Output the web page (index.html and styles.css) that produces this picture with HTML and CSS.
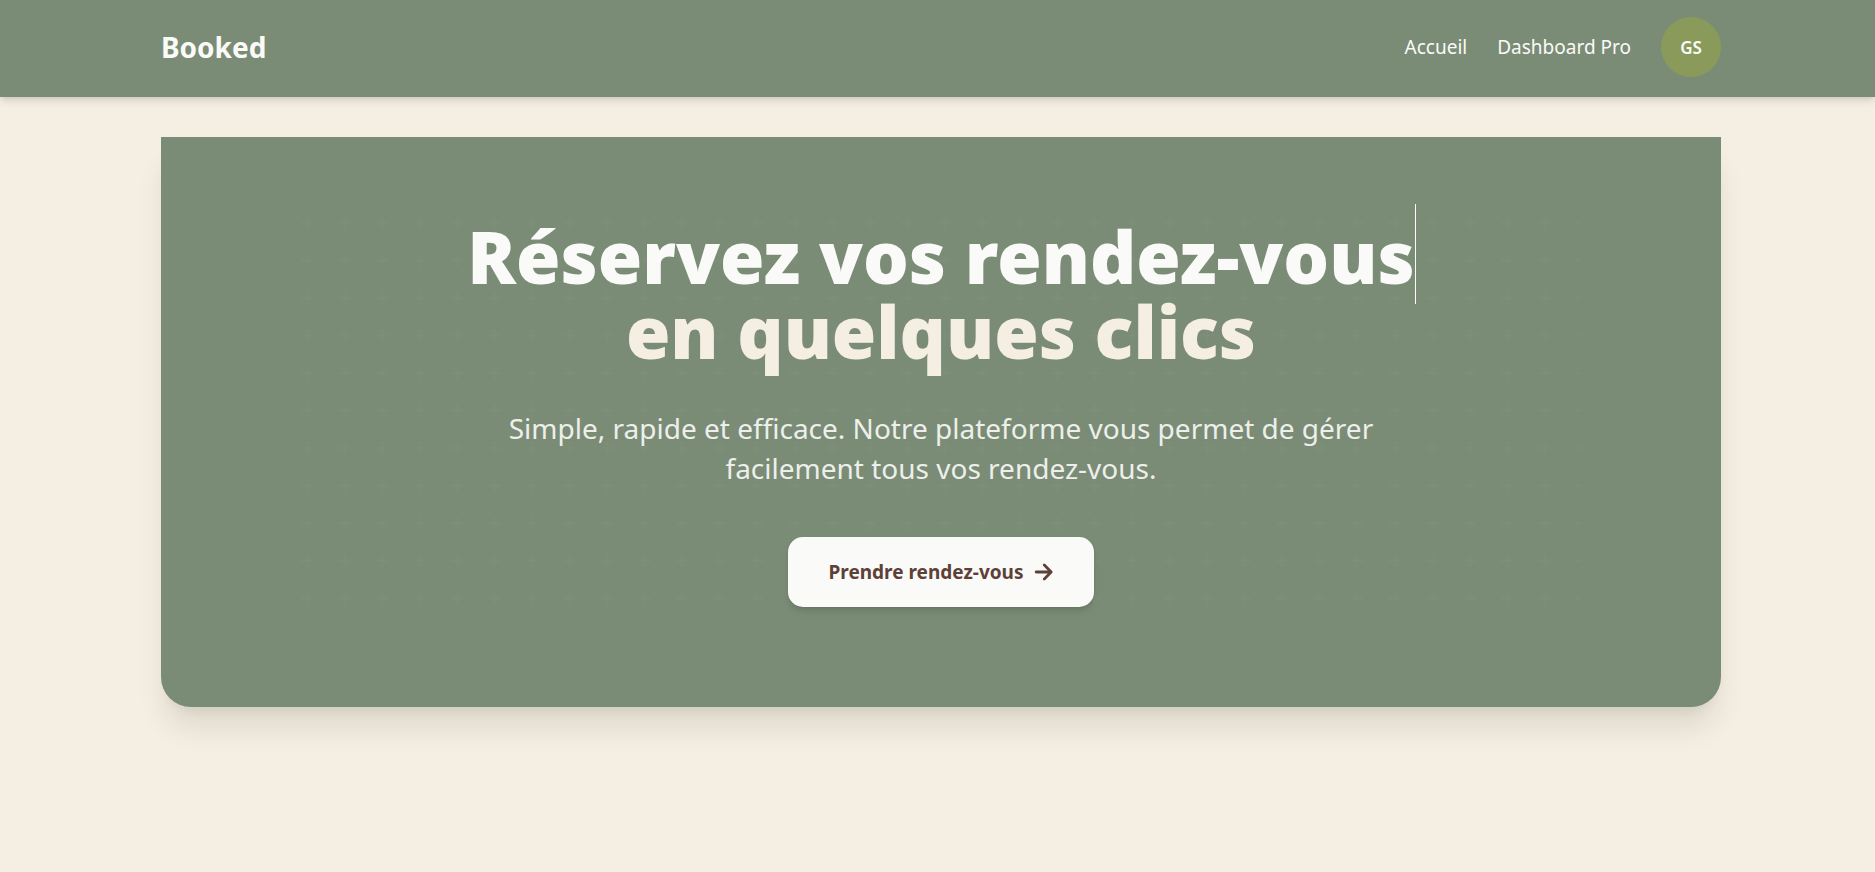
FILE: index.html
```
<!DOCTYPE html>
<html lang="fr">
<head>
<meta charset="utf-8">
<meta name="viewport" content="width=device-width, initial-scale=1">
<title>Booked</title>
<link rel="stylesheet" href="styles.css">
</head>
<body>
<header class="site-header">
  <div class="container header-row">
    <a class="brand" href="#">Booked</a>
    <nav class="nav">
      <a class="nav-link" href="#">Accueil</a>
      <a class="nav-link" href="#">Dashboard Pro</a>
      <button class="avatar" type="button">GS</button>
    </nav>
  </div>
</header>
<main class="main">
  <section class="container hero">
    <div class="hero-content">
      <svg class="hero-pattern" aria-hidden="true">
        <defs>
          <pattern id="plus" width="37.5" height="37.5" patternUnits="userSpaceOnUse">
            <path transform="scale(1.25)" d="M6 4V0H4v4H0v2h4v4h2V6h4V4H6z" fill="#fafaf8"/>
          </pattern>
        </defs>
        <rect width="100%" height="100%" fill="url(#plus)"/>
      </svg>
      <h1 class="hero-title">
        <span class="typed">Réservez vos rendez-vous</span>
        <span class="hero-accent">en quelques clics</span>
      </h1>
      <p class="hero-text">Simple, rapide et efficace. Notre plateforme vous permet de gérer facilement tous vos rendez-vous.</p>
      <a class="cta" href="#">Prendre rendez-vous
        <svg class="cta-icon" viewBox="0 0 20 20" aria-hidden="true"><path d="M2.200 10H16.500M10.300 3.100L17.200 10l-6.900 6.900" fill="none" stroke="currentColor" stroke-width="2.800" stroke-linecap="round" stroke-linejoin="round"/></svg>
      </a>
    </div>
  </section>
</main>
</body>
</html>
```
FILE: styles.css
```
* {
  box-sizing: border-box;
}

body {
  margin: 0;
  min-height: 100vh;
  background: #f5eee3;
  color: #fafaf8;
  font-family: "Segoe UI", "Noto Sans", "Open Sans", sans-serif;
  font-size: 20px;
}

.container {
  width: calc(100% - 80px);
  max-width: 1560px;
  margin: 0 auto;
}

.site-header {
  position: relative;
  padding-left: 7px;
  background: #7a8c76;
  box-shadow: 0 5px 8px -1px rgb(30 50 10 / 11%), 0 3px 5px -2px rgb(0 0 0 / 10%);
}

.header-row {
  display: flex;
  align-items: center;
  justify-content: space-between;
  padding: 17px 0 20px;
}

.brand {
  color: inherit;
  font-size: 28px;
  font-weight: 700;
  line-height: 42px;
  text-decoration: none;
}

.nav {
  display: flex;
  align-items: center;
  gap: 30px;
}

.nav-link {
  color: inherit;
  font-size: 19px;
  line-height: 30px;
  text-decoration: none;
}

.avatar {
  width: 60px;
  height: 60px;
  padding: 0;
  border: 0;
  border-radius: 50%;
  background: #8a9a5b;
  color: inherit;
  font: inherit;
  font-size: 17px;
  font-weight: 600;
}

.main {
  padding: 40px 0 40px 7px;
}

.hero {
  padding: 80px 40px;
  border-radius: 0 0 30px 30px;
  background: #7a8c76;
  box-shadow: 0 25px 31px -6px rgb(30 50 10 / 11%), 0 10px 13px -8px rgb(0 0 0 / 8%);
}

.hero-content {
  position: relative;
  display: flex;
  flex-direction: column;
  align-items: center;
  max-width: 1280px;
  margin: 0 auto;
  padding: 2px 0 20px;
  text-align: center;
}

.hero-pattern {
  position: absolute;
  inset: 0;
  width: 100%;
  height: 100%;
  opacity: 0.018;
}

.hero-title {
  position: relative;
  display: flex;
  flex-direction: column;
  align-items: center;
  margin: 0 0 39px;
  font-size: 72px;
  font-weight: 900;
  line-height: 75px;
}

.typed {
  position: relative;
}

.typed::after {
  content: "";
  position: absolute;
  top: -15px;
  right: -1px;
  width: 1px;
  height: 100px;
  background: #fafaf8;
}

.hero-accent {
  color: #f5eee3;
}

.hero-text {
  position: relative;
  max-width: 900px;
  margin: 0 0 49px;
  font-size: 28px;
  line-height: 40px;
  opacity: 0.9;
}

.cta {
  position: relative;
  display: inline-flex;
  align-items: center;
  gap: 10px;
  padding: 20px 40px;
  border-radius: 15px;
  background: #fafaf8;
  box-shadow: 0 5px 8px -1px rgb(0 0 0 / 10%), 0 3px 5px -2px rgb(0 0 0 / 10%);
  color: #5d4037;
  font-size: 19px;
  font-weight: 700;
  line-height: 30px;
  text-decoration: none;
}

.cta-icon {
  width: 20px;
  height: 20px;
}
```
